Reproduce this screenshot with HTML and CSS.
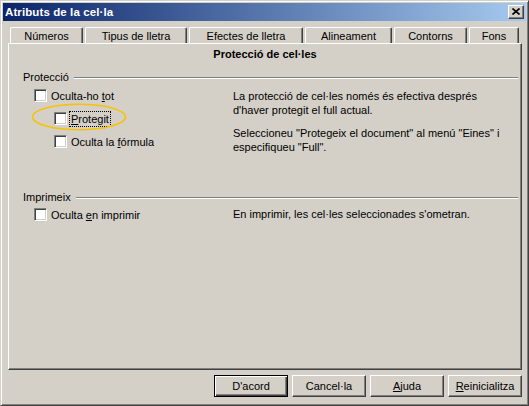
FILE: index.html
```html
<!DOCTYPE html>
<html lang="ca">
<head>
<meta charset="utf-8">
<title>Atributs de la cel·la</title>
<link rel="stylesheet" href="styles.css">
</head>
<body>
<div class="window">
  <div class="titlebar">
    <span class="title">Atributs de la cel·la</span>
    <div class="close">
      <svg width="8" height="7" viewBox="0 0 8 7"><path d="M0.5 0.5 L7.5 6.5 M7.5 0.5 L0.5 6.5" stroke="#000" stroke-width="1.6" fill="none"/></svg>
    </div>
  </div>
  <div class="content">
    <div class="tabs">
      <div class="tab">Números</div>
      <div class="tab">Tipus de lletra</div>
      <div class="tab">Efectes de lletra</div>
      <div class="tab">Alineament</div>
      <div class="tab">Contorns</div>
      <div class="tab">Fons</div>
    </div>
    <div class="panel">
      <div class="panel-title">Protecció de cel·les</div>
      <div class="group">
        <div class="group-head"><span>Protecció</span><span class="rule"></span></div>
        <div class="group-body">
          <div class="opts">
            <div class="row"><span class="cb"></span><span>Oculta-ho <u>t</u>ot</span></div>
            <div class="row nested highlight">
              <span class="cb"></span><span class="focus"><u>P</u>rotegit</span>
              <svg class="ring" width="96" height="28" viewBox="0 0 96 28"><ellipse cx="48" cy="14" rx="46.5" ry="12.8" fill="none" stroke="#f7c300" stroke-width="1.6"/></svg>
            </div>
            <div class="row nested"><span class="cb"></span><span>Oculta la <u>f</u>órmula</span></div>
          </div>
          <div class="desc">
            <p>La protecció de cel·les només és efectiva després<br>d'haver protegit el full actual.</p>
            <p>Seleccioneu "Protegeix el document" al menú "Eines" i<br>especifiqueu "Full".</p>
          </div>
        </div>
      </div>
      <div class="group group2">
        <div class="group-head"><span>Imprimeix</span><span class="rule"></span></div>
        <div class="group-body">
          <div class="opts">
            <div class="row row-print"><span class="cb"></span><span>Oculta <u>e</u>n imprimir</span></div>
          </div>
          <div class="desc desc-print">
            <p>En imprimir, les cel·les seleccionades s'ometran.</p>
          </div>
        </div>
      </div>
    </div>
    <div class="buttons">
      <div class="btn default">D'acord</div>
      <div class="btn">Cancel·la</div>
      <div class="btn"><u>A</u>juda</div>
      <div class="btn"><u>R</u>einicialitza</div>
    </div>
  </div>
</div>
</body>
</html>
```

FILE: styles.css
```css
html, body {
  margin: 0;
  padding: 0;
  background: #d4d0c8;
}
body {
  font-family: "Liberation Sans", Arial, sans-serif;
  font-size: 11px;
  color: #000;
}
.window {
  width: 529px;
  height: 406px;
  box-sizing: border-box;
  border: 1px solid;
  border-color: #d4d0c8 #404040 #404040 #d4d0c8;
  box-shadow: inset 1px 1px #fff, inset -1px -1px #808080;
  padding: 2px;
  background: #d4d0c8;
  display: flex;
  flex-direction: column;
}
.titlebar {
  height: 18px;
  flex: none;
  background: linear-gradient(to right, #0a246a, #a6caf0);
  display: flex;
  align-items: center;
  justify-content: space-between;
  padding: 0 2px 0 2px;
}
.title {
  color: #fff;
  font-weight: bold;
  font-size: 11.5px;
  letter-spacing: 0.1px;
}
.close {
  width: 16px;
  height: 14px;
  box-sizing: border-box;
  background: #d4d0c8;
  border: 1px solid;
  border-color: #fff #404040 #404040 #fff;
  box-shadow: inset -1px -1px #808080;
  display: flex;
  align-items: center;
  justify-content: center;
  padding: 0 1px 1px 0;
}
.close svg { display: block; }
.content {
  flex: 1;
  display: flex;
  flex-direction: column;
  padding: 6px 4px 0 5px;
}
.tabs {
  display: flex;
  gap: 2px;
  height: 16px;
  padding-left: 2px;
}
.tab {
  box-sizing: border-box;
  height: 16px;
  border-top: 1px solid #fff;
  border-left: 1px solid #fff;
  border-right: 1px solid #404040;
  box-shadow: inset -1px 0 #808080;
  border-radius: 2px 2px 0 0;
  text-align: center;
  padding-top: 1px;
  line-height: 14px;
  white-space: nowrap;
}
.tab:nth-child(1) { width: 73px; }
.tab:nth-child(2) { width: 102px; }
.tab:nth-child(3) { width: 114px; }
.tab:nth-child(4) { width: 87px; }
.tab:nth-child(5) { width: 73px; }
.tab:nth-child(6) { width: 50px; }
.panel {
  box-sizing: border-box;
  width: 514px;
  height: 327px;
  border: 1px solid;
  border-color: #fff #404040 #404040 #fff;
  box-shadow: inset -1px -1px #808080;
  display: flex;
  flex-direction: column;
}
.panel-title {
  text-align: center;
  font-weight: bold;
  line-height: 14px;
  padding-top: 3px;
}
.group {
  margin-top: 9px;
}
.group2 {
  margin-top: 36px;
}
.group-head {
  display: flex;
  align-items: center;
  height: 14px;
  line-height: 14px;
  padding: 0 3px 0 14px;
}
.rule {
  flex: 1;
  height: 0;
  border-top: 1px solid #808080;
  border-bottom: 1px solid #fff;
  margin-left: 5px;
  margin-top: 1px;
}
.group-body {
  display: flex;
}
.opts {
  width: 199px;
  padding-left: 25px;
  display: flex;
  flex-direction: column;
  gap: 6px;
  padding-top: 3px;
}
.row {
  display: flex;
  align-items: center;
  height: 17px;
  gap: 4px;
  position: relative;
  white-space: nowrap;
}
.row-print { margin-top: -1px; }
.nested { padding-left: 20px; }
.cb {
  width: 13px;
  height: 13px;
  box-sizing: border-box;
  background: #fff;
  border: 1px solid;
  border-color: #808080 #fff #fff #808080;
  box-shadow: inset 1px 1px #404040, inset -1px -1px #d4d0c8;
  flex: none;
}
.focus {
  outline: 1px dotted #000;
  outline-offset: 1px;
  line-height: 12px;
}
.ring {
  position: absolute;
  left: -3px;
  top: -7px;
  pointer-events: none;
}
.desc {
  padding-top: 5px;
}
.desc p {
  margin: 0;
  line-height: 14px;
  white-space: nowrap;
}
.desc p + p {
  margin-top: 9px;
}
.desc-print { padding-top: 3px; }
.buttons {
  display: flex;
  justify-content: flex-end;
  gap: 4px;
  margin-top: 5px;
}
.btn {
  box-sizing: border-box;
  width: 74px;
  height: 22px;
  border: 1px solid;
  border-color: #fff #404040 #404040 #fff;
  box-shadow: inset -1px -1px #808080;
  display: flex;
  align-items: center;
  justify-content: center;
  padding-bottom: 1px;
}
.btn.default {
  border-color: #000;
  box-shadow: inset 1px 1px #fff, inset -1px -1px #404040, inset -2px -2px #808080;
}
```
